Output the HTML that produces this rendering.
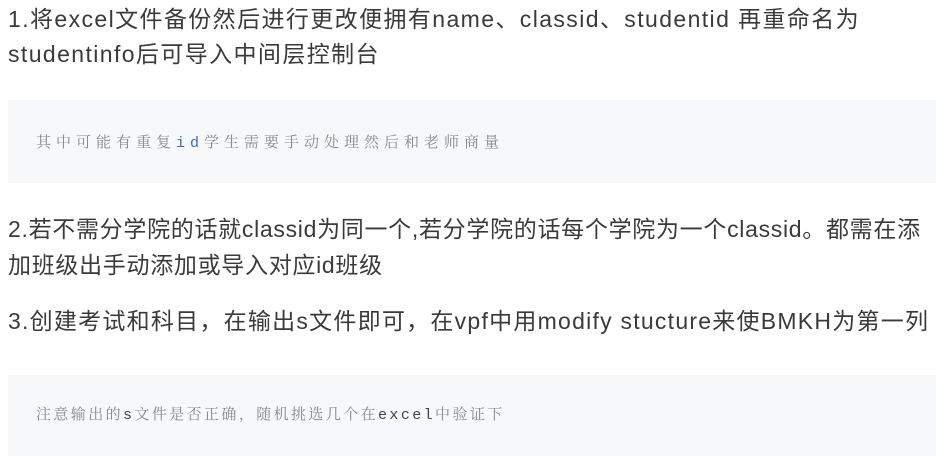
<!DOCTYPE html>
<html><head><meta charset="utf-8"><style>
html,body{margin:0;padding:0;background:#fff;width:936px;height:456px;overflow:hidden}
body{font-family:"Liberation Sans","Noto Sans CJK SC",sans-serif;color:#3a3a3a}
p{position:absolute;left:8px;margin:0;font-size:23px;line-height:35px;white-space:nowrap;letter-spacing:1.4px}
.blk{position:absolute;left:8px;right:0;background:#f6f8fa}
.blk span{position:absolute;left:28px;font-family:"Noto Serif CJK SC",serif;font-size:15px;color:#888;white-space:nowrap}
code{font-family:"Liberation Mono",monospace;font-size:15px}
</style></head><body>
<p style="top:2px">1.将excel文件备份然后进行更改便拥有name、classid、studentid 再重命名为</p>
<p style="top:37px">studentinfo后可导入中间层控制台</p>
<div class="blk" style="top:100px;height:83px"><span style="top:31px;letter-spacing:5px">其中可能有重复<code style="color:#3b6fb0">id</code>学生需要手动处理然后和老师商量</span></div>
<p style="top:212px;letter-spacing:0.7px">2.若不需分学院的话就classid为同一个,若分学院的话每个学院为一个classid。都需在添</p>
<p style="top:248px;letter-spacing:0.7px">加班级出手动添加或导入对应id班级</p>
<p style="top:304px;letter-spacing:1.25px">3.创建考试和科目，在输出s文件即可，在vpf中用modify stucture来使BMKH为第一列</p>
<div class="blk" style="top:375px;height:81px"><span style="top:28px;letter-spacing:2.4px">注意输出的<code style="color:#444">s</code>文件是否正确，随机挑选几个在<code style="color:#444">excel</code>中验证下</span></div>
</body></html>
